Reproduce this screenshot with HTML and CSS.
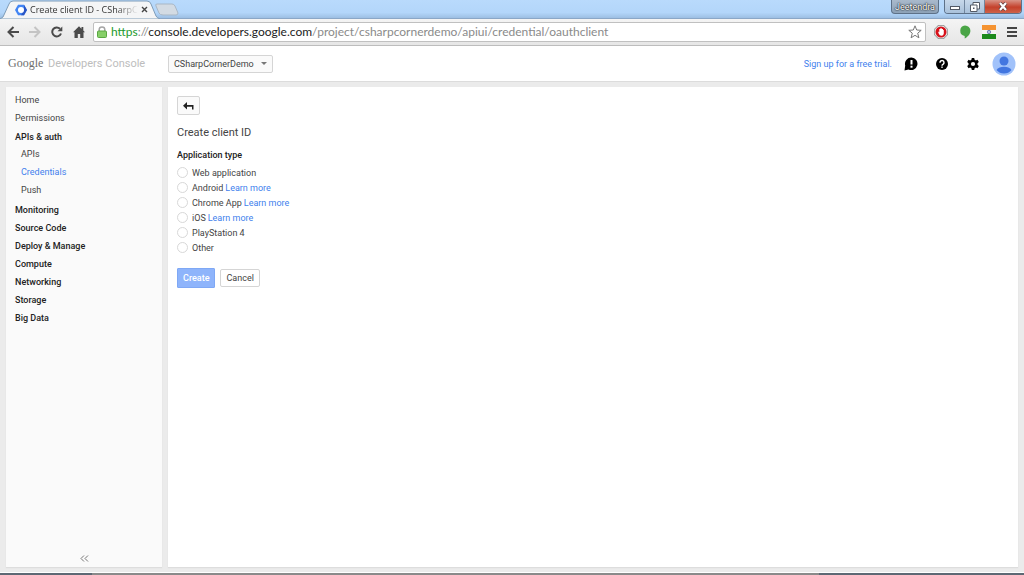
FILE: index.html
```
<!DOCTYPE html>
<html lang="en">
<head>
  <meta charset="UTF-8">
  <meta name="viewport" content="width=device-width, initial-scale=1.0">
  <title>Create client ID</title>
  <link rel="stylesheet" href="styles.css">
</head>
<body>
  <div class="titlebar">
    <div class="tabs">
      <svg class="tab-shape" viewBox="0 0 186 19" aria-hidden="true">
        <path d="M0 19 L3 17 L9 4 Q10 1 13 1 H147 Q150 1 151 4 L156 16 Q157 18 160 19 Z" fill="#f4f5f6" stroke="#7f9db9" stroke-width="1"/>
        <path d="M157 4 H172 Q174 4 175 6 L178 13 Q178 15 176 15 H163 Q160 15 159 13 L156 6 Q155 4 157 4 Z" fill="#d3dbe3" stroke="#a9b7c5" stroke-width="1"/>
      </svg>
      <div class="tab">
        <svg width="12" height="12" viewBox="0 0 12 12" aria-hidden="true">
          <path d="M3 .8 H9 L12 6 L9 11.2 H3 L0 6 Z" fill="#4285f4"/>
          <path d="M9 .8 L12 6 L9 11.2 H6 L9 6 Z" fill="#2a56c6"/>
          <circle cx="6" cy="6" r="3" fill="#fff"/>
        </svg>
        <span class="tab-title">Create client ID - CSharpC</span>
        <button class="tab-close" aria-label="Close tab">
          <svg width="7" height="7" viewBox="0 0 7 7"><path d="M1 1 L6 6 M6 1 L1 6" stroke="#444" stroke-width="1.4"/></svg>
        </button>
      </div>
    </div>
    <div class="window-controls">
      <button class="user-button">Jeetendra</button>
      <div class="window-buttons">
        <button class="win" aria-label="Minimize">
          <svg width="10" height="6" viewBox="0 0 10 6"><rect x=".5" y="2.5" width="9" height="3" fill="#fff" stroke="#535a66"/></svg>
        </button>
        <button class="win" aria-label="Restore">
          <svg width="10" height="10" viewBox="0 0 10 10"><path d="M3 .5 H9.5 V7 H3 Z" fill="#fff" stroke="#535a66"/><path d="M.5 3 H7 V9.5 H.5 Z" fill="#fff" stroke="#535a66"/><rect x="3" y="5.5" width="1.5" height="1.5" fill="#535a66"/></svg>
        </button>
        <button class="win win-close" aria-label="Close">
          <svg width="10" height="9" viewBox="0 0 10 9"><path d="M2 1 L8 8 M8 1 L2 8" stroke="#5c3a3a" stroke-width="3.6"/><path d="M2 1 L8 8 M8 1 L2 8" stroke="#fff" stroke-width="2.2"/></svg>
        </button>
      </div>
    </div>
  </div>

  <div class="toolbar">
    <div class="tools">
      <button aria-label="Back">
        <svg width="12" height="12" viewBox="0 0 12 12"><path d="M12 6 H2 M6.5 1 L1.5 6 L6.5 11" fill="none" stroke="#4b4b4b" stroke-width="2"/></svg>
      </button>
      <button aria-label="Forward">
        <svg width="12" height="12" viewBox="0 0 12 12"><path d="M0 6 H10 M5.5 1 L10.5 6 L5.5 11" fill="none" stroke="#c4c4c4" stroke-width="2"/></svg>
      </button>
      <button aria-label="Reload">
        <svg width="12" height="12" viewBox="0 0 12 12"><path d="M9 2.8 A4.5 4.5 0 1 0 10 7.5" fill="none" stroke="#4b4b4b" stroke-width="2"/><path d="M11.300 .5 V5.300 H6.500 Z" fill="#4b4b4b"/></svg>
      </button>
      <button aria-label="Home">
        <svg width="12" height="12" viewBox="0 0 12 12"><path d="M6 .3 L8.5 2.8 V1 H10.3 V4.6 L12 6.3 H10.5 V12 H7.2 V8 H4.8 V12 H1.5 V6.3 H0 Z" fill="#4b4b4b"/></svg>
      </button>
    </div>
    <div class="omnibox">
      <svg width="10" height="12" viewBox="0 0 10 12" aria-hidden="true"><path d="M2.2 6 V3.5 A2.800 2.600 0 0 1 7.8 3.5 V6" fill="none" stroke="#a5a5a5" stroke-width="1.5"/><rect x=".5" y="5" width="9" height="6.5" rx="1" fill="#86cf68" stroke="#5aa742"/></svg>
      <div class="url"><span class="scheme">https</span>://<span class="host">console.developers.google.com</span>/project/csharpcornerdemo/apiui/credential/oauthclient</div>
      <button aria-label="Bookmark this page">
        <svg width="14" height="14" viewBox="0 0 14 14"><path d="M7 .8 L8.700 5 L13.200 5.300 L9.700 8.200 L10.900 12.800 L7 10.300 L3.100 12.800 L4.300 8.200 L.8 5.300 L5.300 5 Z" fill="#fff" stroke="#777"/></svg>
      </button>
    </div>
    <div class="extensions">
      <button aria-label="Ad blocker">
        <svg width="14" height="14" viewBox="0 0 14 14"><path d="M4.2 0 H9.8 L14 4.2 V9.8 L9.8 14 H4.2 L0 9.8 V4.2 Z" fill="#8b8b8b"/><path d="M4.500 .7 H9.500 L13.300 4.500 V9.500 L9.500 13.300 H4.500 L.7 9.500 V4.500 Z" fill="#e6e6e6"/><circle cx="7" cy="7" r="5.500" fill="#d8121b"/><path d="M4 6.500 L5.300 7.300 V4 H6.300 V3.200 H7.800 V4 H9 V5 H9.800 V8.500 Q9.500 10.800 7.500 10.800 Q5.500 10.800 4.800 8.800 Z" fill="#fff"/></svg>
      </button>
      <button aria-label="Hangouts">
        <svg width="12" height="14" viewBox="0 0 12 14"><path d="M6 .5 A5.4 5.2 0 0 1 11.4 5.8 C11.4 9.3 8.5 12.2 5.7 13.5 V11 A5.3 5.3 0 0 1 6 .5 Z" fill="#4aa547"/></svg>
      </button>
      <button aria-label="India">
        <svg width="14" height="14" viewBox="0 0 14 14"><rect width="14" height="5" fill="#f59331"/><rect width="14" height="4" y="5" fill="#f4f4f4"/><rect width="14" height="5" y="9" fill="#1c8a1c"/><circle cx="7" cy="7" r="1.7" fill="#b9c0dc" stroke="#5262a5" stroke-width=".7"/></svg>
      </button>
      <button aria-label="Menu">
        <svg width="10" height="10" viewBox="0 0 10 10"><path d="M0 1 H10 M0 5 H10 M0 9 H10" stroke="#444" stroke-width="2"/></svg>
      </button>
    </div>
  </div>

  <header class="header">
    <a class="brand" href="#"><span class="brand-google">Google</span> Developers Console</a>
    <button class="project">CSharpCornerDemo <span class="caret"></span></button>
    <div class="header-right">
      <a href="#">Sign up for a free trial.</a>
      <button aria-label="Send feedback">
        <svg width="14" height="14" viewBox="0 0 14 14"><path d="M7.5 .5 A6.300 6.300 0 1 1 4.500 12.500 L.5 13.5 L1.200 8.500 A6.300 6.300 0 0 1 7.5 .5 Z" fill="#000"/><rect x="6.5" y="3" width="2" height="4.5" fill="#fff"/><rect x="6.5" y="8.7" width="2" height="2" fill="#fff"/></svg>
      </button>
      <button aria-label="Help">
        <svg width="12" height="12" viewBox="0 0 12 12"><circle cx="6" cy="6" r="6" fill="#000"/><path d="M4 4.7 A2 2 0 1 1 7.2 6.1 Q6 6.900 6 7.7" fill="none" stroke="#fff" stroke-width="1.4"/><rect x="5.3" y="8.500" width="1.4" height="1.4" fill="#fff"/></svg>
      </button>
      <button aria-label="Settings">
        <svg width="12" height="12" viewBox="0 0 12 12"><path d="M4.8 0 H7.2 L7.6 1.7 L8.9 2.4 L10.5 1.8 L11.8 4 L10.5 5.2 V6.8 L11.8 8 L10.5 10.2 L8.9 9.6 L7.6 10.3 L7.2 12 H4.8 L4.4 10.3 L3.1 9.6 L1.5 10.2 L.2 8 L1.5 6.8 V5.2 L.2 4 L1.5 1.8 L3.1 2.4 L4.4 1.7 Z" fill="#000"/><circle cx="6" cy="6" r="2.100" fill="#fff"/></svg>
      </button>
      <button aria-label="Account">
        <svg width="24" height="24" viewBox="0 0 24 24"><circle cx="12" cy="12" r="11.5" fill="#a1c2fa"/><circle cx="12" cy="9" r="4.500" fill="#4276e0"/><path d="M4.5 18 Q7 14.700 12 14.700 T19.500 18 Q16.500 21.500 12 21.500 T4.500 18 Z" fill="#4276e0"/></svg>
      </button>
    </div>
  </header>

  <div class="page">
    <nav class="sidebar">
      <ul>
        <li><a href="#">Home</a></li>
        <li><a href="#">Permissions</a></li>
        <li class="section open">
          <a href="#">APIs &amp; auth</a>
          <ul>
            <li><a href="#">APIs</a></li>
            <li class="active"><a href="#">Credentials</a></li>
            <li><a href="#">Push</a></li>
          </ul>
        </li>
        <li class="section"><a href="#">Monitoring</a></li>
        <li class="section"><a href="#">Source Code</a></li>
        <li class="section"><a href="#">Deploy &amp; Manage</a></li>
        <li class="section"><a href="#">Compute</a></li>
        <li class="section"><a href="#">Networking</a></li>
        <li class="section"><a href="#">Storage</a></li>
        <li class="section"><a href="#">Big Data</a></li>
      </ul>
      <button class="collapse" aria-label="Collapse menu">
        <svg width="9" height="7" viewBox="0 0 9 7"><path d="M4 .5 L1 3.5 L4 6.5 M8 .5 L5 3.5 L8 6.5" fill="none" stroke="#777"/></svg>
      </button>
    </nav>

    <main class="content">
      <button class="back" aria-label="Back">
        <svg width="11" height="8" viewBox="0 0 11 8"><path d="M4 0 V3 H10.500 V7.500 H9 V4.700 H4 V7.500 L0 3.8 Z" fill="#222"/></svg>
      </button>
      <h1>Create client ID</h1>
      <form>
        <fieldset>
          <legend>Application type</legend>
          <div class="option"><input type="radio" name="type" id="web"><label for="web">Web application</label></div>
          <div class="option"><input type="radio" name="type" id="android"><label for="android">Android</label> <a href="#">Learn more</a></div>
          <div class="option"><input type="radio" name="type" id="chrome"><label for="chrome">Chrome App</label> <a href="#">Learn more</a></div>
          <div class="option"><input type="radio" name="type" id="ios"><label for="ios">iOS</label> <a href="#">Learn more</a></div>
          <div class="option"><input type="radio" name="type" id="ps4"><label for="ps4">PlayStation 4</label></div>
          <div class="option"><input type="radio" name="type" id="other"><label for="other">Other</label></div>
        </fieldset>
        <div class="actions">
          <button type="button" class="btn btn-primary">Create</button>
          <button type="button" class="btn">Cancel</button>
        </div>
      </form>
    </main>
  </div>
  <div class="taskbar"></div>
</body>
</html>
```
FILE: styles.css
```
* {
  box-sizing: border-box;
  margin: 0;
  padding: 0;
}
body {
  display: flex;
  flex-direction: column;
  min-height: 100vh;
  background-color: #ebebeb;
  color: #444;
  font-family: Roboto, sans-serif;
  font-size: 9px;
  line-height: 12px;
}
a {
  color: #427fed;
  text-decoration: none;
}
button {
  border: none;
  background: none;
  color: inherit;
  font: inherit;
  cursor: pointer;
}
svg {
  display: block;
}
ul {
  list-style: none;
}

/* browser window */
.titlebar {
  display: flex;
  justify-content: space-between;
  height: 19px;
  background: linear-gradient(#b9dafc, #b3d6fa 70%, #9dbfe3);
  border-bottom: 1px solid #8ba7c7;
}
.tabs {
  position: relative;
}
.tab-shape {
  position: absolute;
  top: 0;
  left: 0;
  width: 186px;
  height: 19px;
}
.tab {
  position: relative;
  display: flex;
  align-items: center;
  gap: 3px;
  height: 19px;
  padding-left: 15px;
  font-family: "Open Sans", sans-serif;
  color: #333;
}
.tab-title {
  min-width: 104px;
  white-space: nowrap;
  -webkit-mask-image: linear-gradient(to right, #000 80%, transparent);
  mask-image: linear-gradient(to right, #000 80%, transparent);
}
.window-controls {
  display: flex;
  gap: 5px;
  height: 14px;
  padding-right: 2px;
}
.user-button {
  width: 48px;
  background: linear-gradient(#a9b9cb, #8da2b8);
  border: 1px solid #5d7188;
  border-top: none;
  border-radius: 0 0 4px 4px;
  color: #fff;
  text-shadow: 0 0 1px #000, 0 0 2px #000;
}
.window-buttons {
  display: flex;
  border: 1px solid #5d7188;
  border-top: none;
  border-radius: 0 0 4px 4px;
  overflow: hidden;
}
.win {
  display: flex;
  align-items: center;
  justify-content: center;
  width: 20px;
  background: linear-gradient(#c7d8ea, #a9c1da);
  border-right: 1px solid #71869e;
}
.win-close {
  width: 36px;
  background: linear-gradient(#d99487, #c4412b 55%, #cf6248);
  border-right: none;
}
.toolbar {
  display: flex;
  align-items: center;
  gap: 8px;
  height: 27px;
  padding: 0 7px;
  background: linear-gradient(#f4f4f4, #e6e6e6);
  border-bottom: 1px solid #bdbdbd;
}
.tools {
  display: flex;
  align-items: center;
  gap: 10px;
}
.omnibox {
  display: flex;
  flex: 1;
  align-items: center;
  gap: 4px;
  height: 20px;
  padding: 0 3px;
  background-color: #fff;
  border: 1px solid #c0c0c0;
  border-radius: 2px;
}
.url {
  flex: 1;
  overflow: hidden;
  color: #8a8a8a;
  font-family: Lato, sans-serif;
  font-size: 12px;
  line-height: 18px;
  white-space: nowrap;
}
.scheme {
  color: #1c9a2c;
}
.host {
  color: #222;
}
.extensions {
  display: flex;
  align-items: center;
  gap: 11px;
}

/* console header */
.header {
  display: flex;
  align-items: center;
  height: 36px;
  padding: 0 8px;
  background-color: #fff;
  border-bottom: 1px solid #dcdcdc;
}
.brand {
  width: 160px;
  color: #bdbdbd;
  font-size: 11px;
  line-height: 16px;
  white-space: nowrap;
}
.brand-google {
  margin-right: 2px;
  color: #6e6e6e;
  font-family: "Liberation Serif", serif;
  font-size: 12px;
}
.project {
  display: flex;
  align-items: center;
  gap: 7px;
  height: 18px;
  padding: 0 5px;
  background-color: #fafafa;
  border: 1px solid #d5d5d5;
  border-radius: 2px;
}
.caret {
  border: 3px solid transparent;
  border-top-color: #777;
  border-bottom: none;
}
.header-right {
  display: flex;
  align-items: center;
  gap: 7px;
  margin-left: auto;
}
.header-right button {
  display: flex;
  align-items: center;
  justify-content: center;
  width: 24px;
  height: 24px;
}

/* navigation and form */
.page {
  display: flex;
  flex: 1;
  gap: 6px;
  padding: 5px 6px;
}
.sidebar,
.content {
  background-color: #fff;
  box-shadow: 0 1px 1px #ddd;
}
.sidebar {
  display: flex;
  flex-direction: column;
  justify-content: space-between;
  width: 156px;
  padding: 4px 9px 5px;
  background-color: #fafafa;
}
.sidebar a {
  display: block;
  color: #444;
  line-height: 18px;
}
.sidebar .section > a {
  color: #222;
  font-weight: 500;
}
.sidebar .open {
  padding: 2px 0;
}
.sidebar .open > a {
  line-height: 16px;
}
.sidebar .open ul {
  padding-left: 6px;
}
.sidebar .active a {
  color: #427fed;
}
.collapse {
  align-self: center;
}
.content {
  flex: 1;
  padding: 9px;
}
.back {
  display: flex;
  align-items: center;
  justify-content: center;
  width: 23px;
  height: 19px;
  background-color: #fafafa;
  border: 1px solid #d5d5d5;
  border-radius: 2px;
}
h1 {
  margin-top: 10px;
  font-size: 11px;
  font-weight: 400;
  line-height: 16px;
}
fieldset {
  margin-top: 8px;
  border: none;
}
legend {
  margin-bottom: 4px;
  color: #222;
  font-weight: 500;
}
.option {
  display: flex;
  align-items: center;
  height: 15px;
}
.option a {
  margin-left: 2px;
}
input[type="radio"] {
  appearance: none;
  width: 11px;
  height: 11px;
  margin-right: 4px;
  background-color: #fff;
  border: 1px solid #d8d8d8;
  border-radius: 50%;
}
input[type="radio"]:checked {
  border: 3px solid #427fed;
}
.actions {
  display: flex;
  align-items: center;
  gap: 5px;
  margin-top: 13px;
}
.btn {
  height: 18px;
  padding: 0 5px;
  background-color: #fff;
  border: 1px solid #d5d5d5;
  border-radius: 2px;
}
.btn-primary {
  height: 20px;
  background-color: #8eb4fb;
  border-color: #7fa8f5;
  border-radius: 1px;
  color: #fff;
  font-weight: 500;
}
.taskbar {
  height: 3px;
  background: linear-gradient(to right, #5d6874 9%, #8a8a8a 9%, #8a8a8a 80%, #5d6874 80%);
  border-top: 1px solid #fff;
}
```
